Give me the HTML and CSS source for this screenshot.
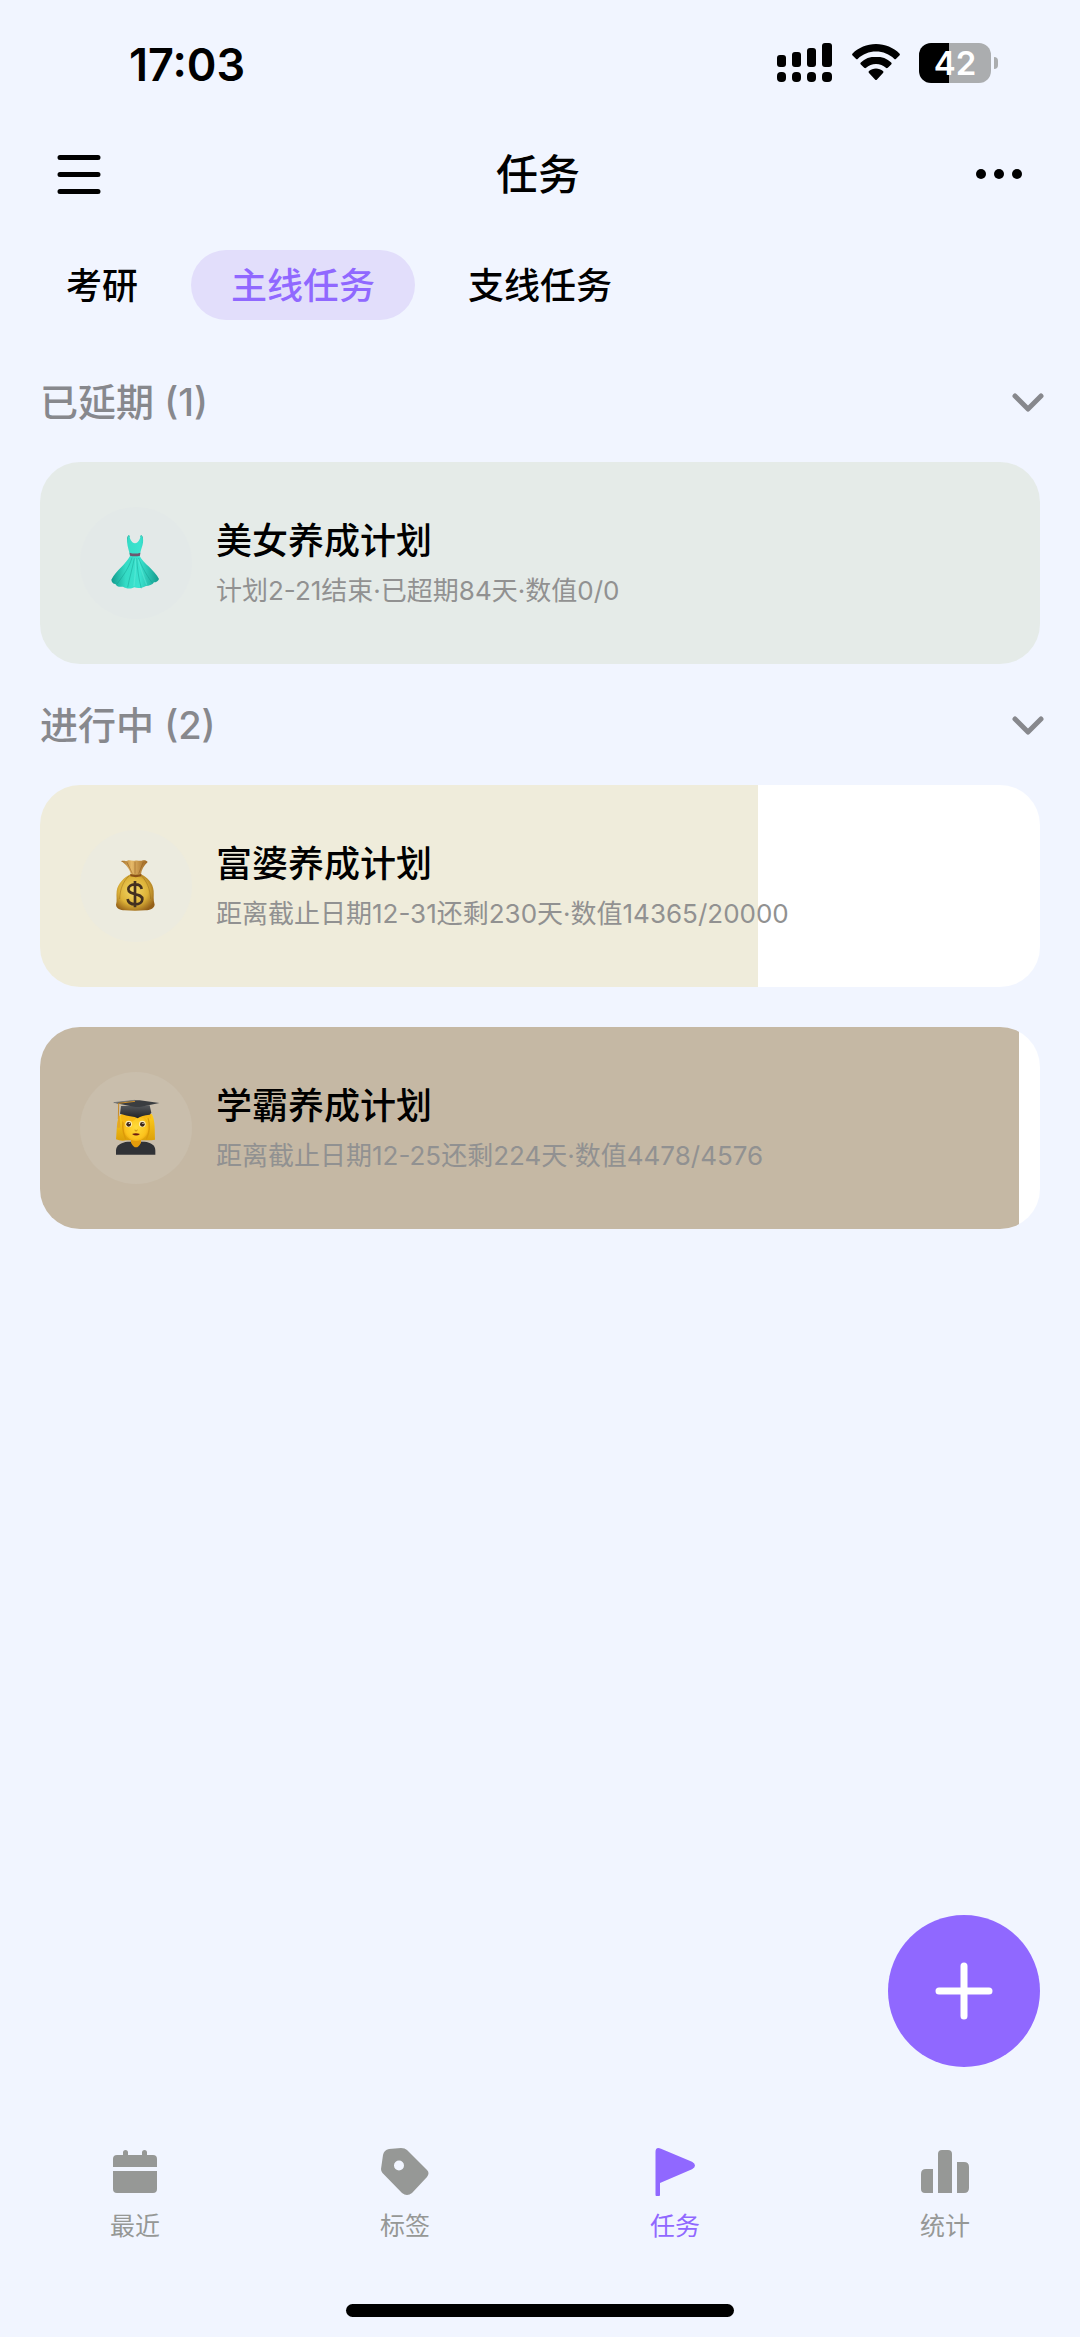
FILE: index.html
```html
<!DOCTYPE html>
<html lang="zh-CN">
<head>
<meta charset="utf-8">
<meta name="viewport" content="width=device-width, initial-scale=1">
<title>任务</title>
<link rel="stylesheet" href="styles.css">
</head>
<body>
<div class="app">
  <div class="status">
    <time class="status-time">17:03</time>
    <div class="status-icons">
      <svg class="signal" viewBox="0 0 56 40" aria-hidden="true">
        <rect x="0" y="12" width="9" height="12" rx="3"/><rect x="15" y="9" width="9" height="15" rx="3"/><rect x="30" y="5" width="9" height="19" rx="3"/><rect x="45" y="0" width="10" height="24" rx="3"/>
        <rect x="0" y="29" width="9" height="10" rx="4"/><rect x="15" y="29" width="9" height="10" rx="4"/><rect x="30" y="29" width="9" height="10" rx="4"/><rect x="45" y="29" width="10" height="10" rx="4"/>
      </svg>
      <svg class="wifi" viewBox="0 0 48 40" aria-hidden="true">
        <path d="M24 1C14.800 1 6.500 4.600.6 10.400a1.400 1.400 0 0 0 0 2l3.300 3.400a1.400 1.400 0 0 0 2 0C10.600 11.300 17 8.600 24 8.600s13.400 2.700 18.100 7.200a1.400 1.400 0 0 0 2 0l3.300-3.400a1.400 1.400 0 0 0 0-2C41.500 4.600 33.200 1 24 1z"/>
        <path d="M24 13.500c-5.900 0-11.200 2.200-15.200 5.900a1.400 1.400 0 0 0 0 2l3.400 3.400a1.400 1.400 0 0 0 1.900 0c2.600-2.400 6.100-3.800 9.900-3.800s7.300 1.400 9.900 3.800a1.400 1.400 0 0 0 1.900 0l3.400-3.400a1.400 1.400 0 0 0 0-2c-4-3.700-9.400-5.900-15.300-5.900z"/>
        <path d="M24 25.500c-2.700 0-5.100.9-7 2.500a1.400 1.400 0 0 0 0 2l6 6.500a1.400 1.400 0 0 0 2 0l6-6.500a1.400 1.400 0 0 0 0-2c-1.900-1.600-4.300-2.500-7-2.500z"/>
      </svg>
      <div class="battery"><span class="battery-level">42</span><span class="battery-cap"></span></div>
    </div>
  </div>

  <header class="nav">
    <button class="icon-button" aria-label="菜单">
      <svg class="menu-icon" viewBox="0 0 44 40"><path d="M3 3.500h38M3 20.500h38M3 37.500h38" stroke="#000" stroke-width="5" stroke-linecap="round"/></svg>
    </button>
    <h1 class="nav-title">任务</h1>
    <button class="icon-button" aria-label="更多">
      <svg class="more-icon" viewBox="0 0 48 12"><circle cx="6" cy="6" r="5"/><circle cx="24" cy="6" r="5"/><circle cx="42" cy="6" r="5"/></svg>
    </button>
  </header>

  <div class="tabs" role="tablist">
    <button class="tab" role="tab">考研</button>
    <button class="tab tab-active" role="tab" aria-selected="true">主线任务</button>
    <button class="tab" role="tab">支线任务</button>
  </div>

  <main class="content">
    <section>
      <button class="group-head" aria-expanded="true">
        <span>已延期 (1)</span>
        <svg class="chevron" viewBox="0 0 32 20"><path d="M3 4l13 13L29 4"/></svg>
      </button>
      <div class="cards">
        <article class="card card-mint">
          <div class="avatar">
            <svg viewBox="81 99 180 180" aria-hidden="true">
              <defs><linearGradient id="cloth" x1="0" x2="1"><stop offset="0" stop-color="#129b8d"/><stop offset=".3" stop-color="#35dcc6"/><stop offset=".6" stop-color="#3be3cf"/><stop offset="1" stop-color="#149a8c"/></linearGradient></defs>
              <path d="M149 128c-3-9-3-16 1-21M186 128c4-9 4-16 0-21" fill="none" stroke="#168c81" stroke-width="5"/>
              <path d="M145 116c1-5 3-9 6-11 1 12 7 24 17 25 10-1 16-13 17-25 4 2 6 6 7 11 2 15-5 28-8 42l-2 10c11 22 45 42 58 69-3 7-8 10-15 10-5 8-15 11-24 11-9 6-25 8-35 4-11 6-26 4-34-2-12 2-19-1-23-8-7-1-11-5-12-13 15-28 45-48 56-71-2-17-11-34-8-52z" fill="url(#cloth)"/>
              <path d="M159 173c-9 31-28 56-45 79M166 175c-6 31-15 60-20 87M173 175c2 31 6 62 14 90M179 174c9 27 27 57 42 76" fill="none" stroke="#109787" stroke-width="3" opacity=".4"/>
              <path d="M170 176c0 30-2 58-5 82M178 178c6 25 16 52 25 76" fill="none" stroke="#6df1df" stroke-width="4" opacity=".4"/>
              <path d="M152 158q16 5 32 0l-1 9q-16 4-30 0z" fill="#6f576f"/>
            </svg>
          </div>
          <div class="card-text">
            <h2 class="card-title">美女养成计划</h2>
            <p class="card-note">计划2-21结束·已超期84天·数值0/0</p>
          </div>
        </article>
      </div>
    </section>

    <section>
      <button class="group-head" aria-expanded="true">
        <span>进行中 (2)</span>
        <svg class="chevron" viewBox="0 0 32 20"><path d="M3 4l13 13L29 4"/></svg>
      </button>
      <div class="cards">
        <article class="card card-cream" style="--progress:71.825%">
          <div class="avatar">
            <svg viewBox="81 93 180 180" aria-hidden="true">
              <defs><radialGradient id="gold" cx=".45" cy=".45" r=".62"><stop offset="0" stop-color="#f3d866"/><stop offset=".6" stop-color="#ddb238"/><stop offset="1" stop-color="#946018"/></radialGradient>
              <linearGradient id="neck" x1="0" x2="1"><stop offset="0" stop-color="#a26e28"/><stop offset=".4" stop-color="#e6b968"/><stop offset="1" stop-color="#9b6420"/></linearGradient></defs>
              <path d="M126 109c6-4 13 1 19-2 7-4 14 2 22 0 7-2 15 1 21 0 8-2 14-1 18 4-11 10-19 23-20 37h-31c-2-15-14-31-29-39z" fill="url(#neck)"/>
              <path d="M155 148h31c19 9 36 26 38 50 1 14-2 26 3 41-2 12-14 16-28 17-20 2-42 2-62 0-13-1-25-5-26-17 4-11 0-25 2-40 3-24 23-42 42-51z" fill="url(#gold)"/>
              <path d="M150 153c-18 17-27 39-28 69M188 153c16 17 25 38 27 69" fill="none" stroke="#986b1c" stroke-width="3" opacity=".5"/>
              <path d="M144 112l16 34M168 110v36M193 111l-14 35" stroke="#8c551c" stroke-width="3" opacity=".5"/>
              <path d="M154 147q16 5 33 0v7q-17 5-33 0z" fill="#8b5118"/>
              <path d="M188 192c-1-9-9-14-20-14-12 0-20 6-20 15 0 20 42 9 42 30 0 9-9 15-21 15-13 0-22-6-23-16M168 168v79" fill="none" stroke="#433020" stroke-width="8"/>
            </svg>
          </div>
          <div class="card-text">
            <h2 class="card-title">富婆养成计划</h2>
            <p class="card-note">距离截止日期12-31还剩230天·数值14365/20000</p>
          </div>
        </article>
        <article class="card card-tan" style="--progress:97.858%">
          <div class="avatar">
            <svg viewBox="81 87 180 180" aria-hidden="true">
              <defs><radialGradient id="face" cx=".5" cy=".5" r=".6"><stop offset="0" stop-color="#ffdc3c"/><stop offset=".7" stop-color="#fcc31d"/><stop offset="1" stop-color="#e79a0a"/></radialGradient>
              <linearGradient id="hair" x1="0" x2="0" y1="0" y2="1"><stop offset="0" stop-color="#ffce1b"/><stop offset="1" stop-color="#dca009"/></linearGradient>
              <linearGradient id="cap" x1="0" x2="0" y1="0" y2="1"><stop offset="0" stop-color="#55585b"/><stop offset="1" stop-color="#202225"/></linearGradient></defs>
              <path d="M124 138c-13 13-10 51-13 73q15 6 30 3h63q15 0 24-2c-1-25 1-56-9-76z" fill="url(#hair)"/>
              <path d="M111 257v-12c0-17 16-25 35-27h50c20 2 33 10 33 27v12z" fill="#303236"/>
              <path d="M156 207h30v14q-15 28-30 0z" fill="#e49c0b"/>
              <ellipse cx="171" cy="175" rx="38" ry="41" fill="url(#face)"/>
              <path d="M137 139c-8 21-7 49 3 72M207 145c6 21 5 45-5 66" fill="none" stroke="#dc9908" stroke-width="4"/>
              <path d="M127 134q41 12 90 0v15q-25-4-43-3-15 17-39 15-12-7-8-27z" fill="#f7b914"/>
              <circle cx="149" cy="165" r="10" fill="#fff0b8"/><circle cx="190" cy="165" r="10" fill="#fff0b8"/>
              <circle cx="149" cy="166" r="7" fill="#402718"/><circle cx="190" cy="166" r="7" fill="#402718"/>
              <circle cx="151" cy="163" r="2" fill="#fff"/><circle cx="192" cy="163" r="2" fill="#fff"/>
              <path d="M168 182q-1 4 3 4 4 0 4-4" fill="none" stroke="#c98a10" stroke-width="3"/>
              <path d="M159 195q11-5 24 0-11 9-24 0z" fill="#6b1b11"/>
              <path d="M126 111l-3 23q15 5 44 10l9 4q12-9 36-11l5-6-5-22z" fill="url(#cap)"/>
              <path d="M104 101l63-7q8-1 15 0l59 8-55 11q-10 2-21 0z" fill="#3a3d40"/>
              <path d="M104 101l63-7" stroke="#77797a" stroke-width="3"/>
              <path d="M168 97l-49 6-1 47" fill="none" stroke="#c98d2b" stroke-width="3"/><path d="M119 139l-5 36q5 4 10 0l-2-34z" fill="#e4a622"/>
            </svg>
          </div>
          <div class="card-text">
            <h2 class="card-title">学霸养成计划</h2>
            <p class="card-note">距离截止日期12-25还剩224天·数值4478/4576</p>
          </div>
        </article>
      </div>
    </section>
  </main>

  <button class="fab" aria-label="新建任务">
    <svg viewBox="0 0 60 60"><path d="M30 5v50M5 30h50" stroke="#fff" stroke-width="7" stroke-linecap="round"/></svg>
  </button>

  <nav class="bottom-nav">
    <a class="nav-item" href="#recent">
      <svg viewBox="0 0 48 48" aria-hidden="true"><path d="M2 19v-8q0-4 4-4h6V4.500a2.500 2.500 0 0 1 5 0V7h14V4.500a2.500 2.500 0 0 1 5 0V7h6q4 0 4 4v8zM2 23h44v18q0 4-4 4H6q-4 0-4-4z"/></svg>
      <span>最近</span>
    </a>
    <a class="nav-item" href="#tags">
      <svg viewBox="0 0 48 48" aria-hidden="true"><path fill-rule="evenodd" d="M2 7q1-5 6-6l12-1q4 0 6 2l20 20q3 3 0 7L31 45q-5 4-10 0L1.500 25Q0 23.500 0 21zM18 12.500a5 5 0 1 0 0 10 5 5 0 0 0 0-10z"/></svg>
      <span>标签</span>
    </a>
    <a class="nav-item nav-item-active" href="#tasks" aria-current="page">
      <svg viewBox="0 0 48 48" aria-hidden="true"><path d="M4.500 4Q4.500-1.500 10 .8l31 13q6 3.700 0 7.500L9 35v11.500a2.200 2.200 0 0 1-4.500 0z"/></svg>
      <span>任务</span>
    </a>
    <a class="nav-item" href="#stats">
      <svg viewBox="0 0 48 48" aria-hidden="true"><path d="M12 21v24H4q-4 0-4-4V26q0-5 5-5zM17 45V6q0-4 4-4h6q4 0 4 4v39zM36 45V14h7q5 0 5 5v21q0 5-5 5z"/></svg>
      <span>统计</span>
    </a>
  </nav>
  <div class="home-bar"></div>
</div>
</body>
</html>
```

FILE: styles.css
```css
* {
  box-sizing: border-box;
}

body {
  margin: 0;
  background: #f1f5ff;
  color: #000;
  font-family: Inter, "Noto Sans CJK SC", sans-serif;
}

h1,
h2,
p {
  margin: 0;
}

button {
  margin: 0;
  padding: 0;
  border: 0;
  background: none;
  color: inherit;
  font: inherit;
  cursor: pointer;
}

svg {
  display: block;
  flex: none;
}

.app {
  display: flex;
  flex-direction: column;
  min-height: 100vh;
}

.status {
  display: flex;
  align-items: center;
  justify-content: space-between;
  height: 130px;
  padding: 0 82px 0 129px;
}

.status-time {
  font-size: 45px;
  font-weight: 600;
  line-height: 56px;
}

.status-icons {
  display: flex;
  align-items: center;
  gap: 19px;
  padding-bottom: 4px;
}

.signal {
  width: 56px;
  height: 40px;
}

.wifi {
  width: 48px;
  height: 40px;
}

.battery {
  display: flex;
  align-items: center;
  gap: 3px;
}

.battery-level {
  width: 72px;
  border-radius: 12px;
  background: linear-gradient(90deg, #000 42%, #abadaf 42%);
  color: #fff;
  font-size: 33px;
  font-weight: 600;
  line-height: 40px;
  text-align: center;
}

.battery-cap {
  width: 4px;
  height: 12px;
  border-radius: 0 4px 4px 0;
  background: #abadaf;
}

.nav {
  display: flex;
  align-items: center;
  justify-content: space-between;
  height: 88px;
  padding: 0 57px;
}

.icon-button {
  display: flex;
  align-items: center;
  height: 88px;
}

.menu-icon {
  width: 44px;
  height: 40px;
}

.more-icon {
  width: 48px;
  height: 12px;
}

.nav-title {
  padding-top: 2px;
  font-size: 42px;
  font-weight: 500;
  line-height: 56px;
}

.tabs {
  display: flex;
  gap: 13px;
  padding: 32px 26px 21px;
}

.tab {
  height: 70px;
  padding: 0 40px;
  border-radius: 35px;
  font-size: 36px;
  font-weight: 500;
  line-height: 72px;
}

.tab-active {
  background: #e2defb;
  color: #9068ff;
}

.content {
  flex: 1;
  padding: 0 40px;
}

.group-head {
  display: flex;
  align-items: center;
  justify-content: space-between;
  width: 100%;
  height: 121px;
  color: #87888d;
  font-size: 38px;
  font-weight: 500;
  line-height: 48px;
}

.chevron {
  width: 32px;
  height: 20px;
  margin-right: -4px;
  fill: none;
  stroke: currentColor;
  stroke-width: 5;
  stroke-linecap: round;
  stroke-linejoin: round;
}

.cards {
  display: flex;
  flex-direction: column;
  gap: 40px;
}

.card {
  display: flex;
  align-items: center;
  gap: 24px;
  height: 202px;
  padding: 0 40px;
  border-radius: 40px;
  background: linear-gradient(90deg, var(--fill) var(--progress, 100%), #fff var(--progress, 100%));
}

.card-mint {
  --fill: #e5ebe8;
  --disc: #e3e9e8;
}

.card-cream {
  --fill: #efecdb;
  --disc: #ecebdf;
}

.card-tan {
  --fill: #c5b8a4;
  --disc: #c9beac;
}

.avatar {
  display: flex;
  flex: none;
  align-items: center;
  justify-content: center;
  width: 112px;
  height: 112px;
  border-radius: 50%;
  background: var(--disc);
}

.avatar svg {
  width: 60px;
  height: 60px;
}

.card-text {
  display: flex;
  flex-direction: column;
  gap: 8px;
}

.card-title {
  font-size: 36px;
  font-weight: 500;
  line-height: 48px;
}

.card-note {
  color: #919191;
  font-size: 26px;
  line-height: 36px;
}

.fab {
  position: fixed;
  right: 40px;
  bottom: 270px;
  display: flex;
  align-items: center;
  justify-content: center;
  width: 152px;
  height: 152px;
  border-radius: 50%;
  background: #9068ff;
}

.fab svg {
  width: 60px;
  height: 60px;
}

.bottom-nav {
  display: grid;
  grid-template-columns: repeat(4, 1fr);
  padding-bottom: 60px;
}

.nav-item {
  display: flex;
  flex-direction: column;
  align-items: center;
  gap: 12px;
  color: #969896;
  font-size: 25px;
  line-height: 36px;
  text-decoration: none;
}

.nav-item svg {
  width: 48px;
  height: 48px;
  fill: currentColor;
}

.nav-item-active {
  color: #9068ff;
}

.home-bar {
  width: 36%;
  height: 13px;
  margin: 0 auto 20px;
  border-radius: 7px;
  background: #000;
}
```
